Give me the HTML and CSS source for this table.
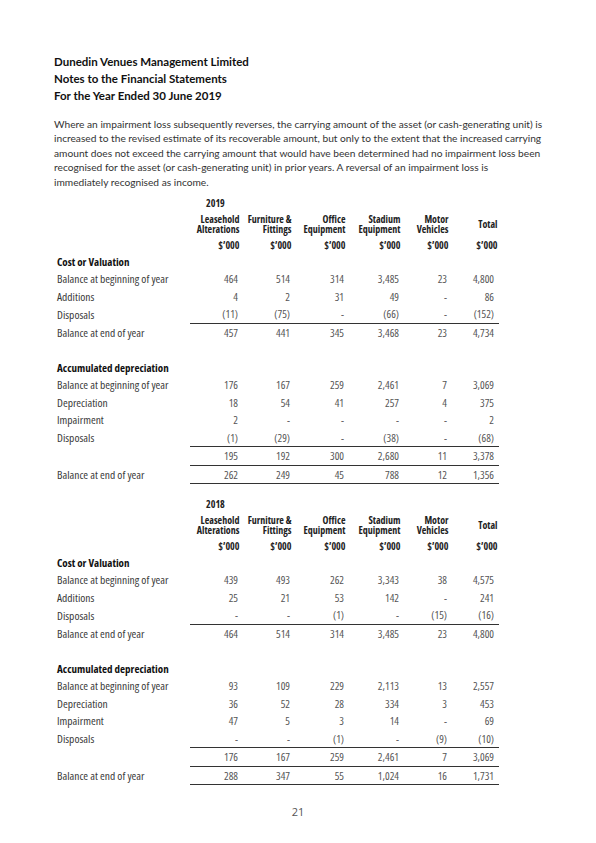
FILE: index.html
```html
<!DOCTYPE html>
<html lang="en">
<head>
  <meta charset="UTF-8">
  <title>Notes to the Financial Statements - Dunedin Venues Management Limited</title>
  <link rel="stylesheet" href="styles.css">
</head>
<body>
  <div class="page">
    <div class="heading">
      <div>Dunedin Venues Management Limited</div>
      <div>Notes to the Financial Statements</div>
      <div>For the Year Ended 30 June 2019</div>
    </div>

    <p class="note">Where an impairment loss subsequently reverses, the carrying amount of the asset (or cash-generating unit) is increased to the revised estimate of its recoverable amount, but only to the extent that the increased carrying amount does not exceed the carrying amount that would have been determined had no impairment loss been recognised for the asset (or cash-generating unit) in prior years. A reversal of an impairment loss is<br>immediately recognised as income.</p>

    <!-- 2019 -->
    <table class="assets">
      <colgroup>
        <col class="c-label"><col class="c1"><col class="c2"><col class="c3"><col class="c4"><col class="c5"><col class="c6">
      </colgroup>
      <tr class="year-row"><td></td><td colspan="6" class="year">2019</td></tr>
      <tr class="head-row">
        <td></td>
        <th>Leasehold<br>Alterations</th>
        <th>Furniture &amp;<br>Fittings</th>
        <th>Office<br>Equipment</th>
        <th>Stadium<br>Equipment</th>
        <th>Motor<br>Vehicles</th>
        <th>Total</th>
      </tr>
      <tr class="unit-row"><td></td><th>$’000</th><th>$’000</th><th>$’000</th><th>$’000</th><th>$’000</th><th>$’000</th></tr>
      <tr class="section"><td colspan="7">Cost or Valuation</td></tr>
      <tr><td>Balance at beginning of year</td><td>464</td><td>514</td><td>314</td><td>3,485</td><td>23</td><td>4,800</td></tr>
      <tr><td>Additions</td><td>4</td><td>2</td><td>31</td><td>49</td><td>-</td><td>86</td></tr>
      <tr class="ruled"><td>Disposals</td><td>(11)</td><td>(75)</td><td>-</td><td>(66)</td><td>-</td><td>(152)</td></tr>
      <tr><td>Balance at end of year</td><td>457</td><td>441</td><td>345</td><td>3,468</td><td>23</td><td>4,734</td></tr>
      <tr class="spacer"><td colspan="7"></td></tr>
      <tr class="section"><td colspan="7">Accumulated depreciation</td></tr>
      <tr><td>Balance at beginning of year</td><td>176</td><td>167</td><td>259</td><td>2,461</td><td>7</td><td>3,069</td></tr>
      <tr><td>Depreciation</td><td>18</td><td>54</td><td>41</td><td>257</td><td>4</td><td>375</td></tr>
      <tr><td>Impairment</td><td>2</td><td>-</td><td>-</td><td>-</td><td>-</td><td>2</td></tr>
      <tr class="ruled"><td>Disposals</td><td>(1)</td><td>(29)</td><td>-</td><td>(38)</td><td>-</td><td>(68)</td></tr>
      <tr class="ruled"><td></td><td>195</td><td>192</td><td>300</td><td>2,680</td><td>11</td><td>3,378</td></tr>
      <tr class="ruled"><td>Balance at end of year</td><td>262</td><td>249</td><td>45</td><td>788</td><td>12</td><td>1,356</td></tr>
    </table>

    <!-- 2018 -->
    <table class="assets prior">
      <colgroup>
        <col class="c-label"><col class="c1"><col class="c2"><col class="c3"><col class="c4"><col class="c5"><col class="c6">
      </colgroup>
      <tr class="year-row"><td></td><td colspan="6" class="year">2018</td></tr>
      <tr class="head-row">
        <td></td>
        <th>Leasehold<br>Alterations</th>
        <th>Furniture &amp;<br>Fittings</th>
        <th>Office<br>Equipment</th>
        <th>Stadium<br>Equipment</th>
        <th>Motor<br>Vehicles</th>
        <th>Total</th>
      </tr>
      <tr class="unit-row"><td></td><th>$’000</th><th>$’000</th><th>$’000</th><th>$’000</th><th>$’000</th><th>$’000</th></tr>
      <tr class="section"><td colspan="7">Cost or Valuation</td></tr>
      <tr><td>Balance at beginning of year</td><td>439</td><td>493</td><td>262</td><td>3,343</td><td>38</td><td>4,575</td></tr>
      <tr><td>Additions</td><td>25</td><td>21</td><td>53</td><td>142</td><td>-</td><td>241</td></tr>
      <tr class="ruled"><td>Disposals</td><td>-</td><td>-</td><td>(1)</td><td>-</td><td>(15)</td><td>(16)</td></tr>
      <tr><td>Balance at end of year</td><td>464</td><td>514</td><td>314</td><td>3,485</td><td>23</td><td>4,800</td></tr>
      <tr class="spacer"><td colspan="7"></td></tr>
      <tr class="section"><td colspan="7">Accumulated depreciation</td></tr>
      <tr><td>Balance at beginning of year</td><td>93</td><td>109</td><td>229</td><td>2,113</td><td>13</td><td>2,557</td></tr>
      <tr><td>Depreciation</td><td>36</td><td>52</td><td>28</td><td>334</td><td>3</td><td>453</td></tr>
      <tr><td>Impairment</td><td>47</td><td>5</td><td>3</td><td>14</td><td>-</td><td>69</td></tr>
      <tr class="ruled"><td>Disposals</td><td>-</td><td>-</td><td>(1)</td><td>-</td><td>(9)</td><td>(10)</td></tr>
      <tr class="ruled"><td></td><td>176</td><td>167</td><td>259</td><td>2,461</td><td>7</td><td>3,069</td></tr>
      <tr class="ruled"><td>Balance at end of year</td><td>288</td><td>347</td><td>55</td><td>1,024</td><td>16</td><td>1,731</td></tr>
    </table>

    <div class="page-number">21</div>
  </div>
</body>
</html>
```
FILE: styles.css
```css
body {
  margin: 0;
  background: #ffffff;
  color: #333333;
  font-family: "Open Sans", Arial, sans-serif;
}
.page {
  width: 596px;
  padding: 53px 0 0 54px;
  box-sizing: border-box;
}
.heading {
  font-family: Lato, sans-serif;
  font-size: 11.5px;
  font-weight: bold;
  line-height: 17px;
  color: #111111;
}
.note {
  width: 498px;
  margin: 13px 0 0;
  font-family: Lato, sans-serif;
  font-size: 10.2px;
  line-height: 14.4px;
  color: #333333;
}

/* asset tables */
.assets {
  border-collapse: collapse;
  table-layout: fixed;
  width: 445px;
  margin-top: 7px;
  font-size: 11px;
  font-stretch: 75%;
}
.assets.prior {
  margin-top: 13px;
}
.c-label { width: 136px; }
.c1 { width: 51px; }
.c2 { width: 52px; }
.c3 { width: 54px; }
.c4 { width: 55px; }
.c5 { width: 48px; }
.c6 { width: 49px; }
.assets td, .assets th {
  padding: 0;
  white-space: nowrap;
}
.assets td {
  height: 17.5px;
  text-align: right;
  padding-right: 3px;
  color: #555555;
  vertical-align: middle;
}
.assets td:last-child {
  padding-right: 5px;
}
.assets td:first-child {
  text-align: left;
  padding: 0 0 0 3px;
  font-size: 11.5px;
  color: #3a3a3a;
}
.assets th {
  font-size: 10px;
  font-weight: bold;
  text-align: right;
  padding-right: 1.5px;
  color: #222222;
  vertical-align: middle;
}
.year-row td {
  height: 14px;
}
.assets td.year {
  text-align: left;
  padding-left: 16px;
  font-size: 10px;
  font-weight: bold;
  color: #222222;
}
.head-row th, .head-row td {
  height: 26px;
  line-height: 10px;
  padding-top: 1px;
}
.unit-row th, .unit-row td {
  height: 15px;
}
.assets .section td {
  height: 18px;
  font-size: 11px;
  font-weight: bold;
  color: #111111;
}
.spacer td {
  height: 17px;
}
.ruled td:not(:first-child) {
  border-bottom: 1px solid #333333;
}
.page-number {
  width: 488px;
  margin-top: 20px;
  text-align: center;
  font-size: 11px;
  line-height: 14px;
  color: #555555;
}
```
